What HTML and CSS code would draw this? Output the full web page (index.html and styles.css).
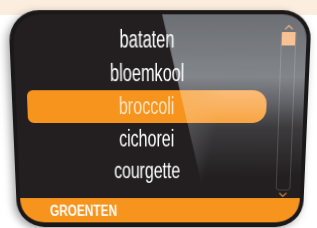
FILE: index.html
```html
<!DOCTYPE html>
<html lang="nl">
  <head>
    <meta charset="UTF-8" />
    <meta name="viewport" content="width=device-width, initial-scale=1.0" />
    <title>Groenten</title>
    <link rel="stylesheet" href="styles.css">
  </head>
  <body>
    <div class="stage">
      <div class="panel">
        <div class="screen">
          <ul class="list">
            <li><span>bataten</span></li>
            <li><span>bloemkool</span></li>
            <li class="selected"><span>broccoli</span></li>
            <li><span>cichorei</span></li>
            <li><span>courgette</span></li>
          </ul>

          <div class="scroll">
            <svg class="arrow" viewBox="0 0 9 5">
              <polyline points="0.8,4.4 4.5,0.8 8.2,4.4" />
            </svg>
            <div class="track">
              <div class="thumb"></div>
            </div>
            <svg class="arrow down" viewBox="0 0 9 5">
              <polyline points="0.8,0.6 4.5,4.2 8.2,0.6" />
            </svg>
          </div>
        </div>

        <div class="footer"><span>GROENTEN</span></div>

        <!-- glass reflection over the screen -->
        <div class="gloss"></div>
      </div>
    </div>
  </body>
</html>
```

FILE: styles.css
```css
body {
  margin: 0;
  width: 317px;
  height: 228px;
  overflow: hidden;
  background: linear-gradient(#fbeedf 0, #fbeedf 15px, #fff 15px);
  font-family: "Liberation Sans", Arial, sans-serif;
}

.stage {
  padding: 12px 0 0 13px;
}

.panel {
  position: relative;
  width: 294px;
  height: 220px;
  box-sizing: border-box;
  display: flex;
  flex-direction: column;
  background-color: #231f20;
  border: 4px solid #1b1819;
  border-bottom-width: 5px;
  border-radius: 30px 28px 28px 28px;
  overflow: hidden;
  box-shadow: -3px 3px 9px rgba(0, 0, 0, 0.35);
  transform: perspective(600px) rotateX(-10deg);
}

.screen {
  display: flex;
  height: 185px;
}

.list {
  list-style: none;
  margin: 0;
  padding: 8px 0 0 11px;
  width: 238px;
}

.list li {
  height: 33px;
  line-height: 32px;
  text-align: center;
  color: #fff;
  font-size: 23px;
}

/* the reference face is a condensed grotesque */
.list span,
.footer span {
  display: inline-block;
  transform: scaleX(0.7);
}

.list .selected {
  background-color: #f7941d;
  color: #fde4c6;
  border-radius: 6px 14px 14px 6px;
}

.scroll {
  display: flex;
  flex-direction: column;
  align-items: center;
  width: 15px;
  margin-left: 12px;
  padding-top: 10px;
}

.arrow {
  display: block;
  width: 9px;
  height: 5px;
  fill: none;
  stroke: #e0893a;
  stroke-width: 1.2;
}

.arrow.down {
  margin-top: 2px;
}

.track {
  box-sizing: border-box;
  width: 15px;
  height: 160px;
  margin-top: 2px;
  border: 1px solid rgba(255, 255, 255, 0.16);
  border-top: none;
  border-radius: 0 0 4px 4px;
}

.thumb {
  height: 13px;
  background-color: #f39a48;
}

.footer {
  height: 26px;
  padding-left: 30px;
  line-height: 28px;
  background-color: #f7941d;
  color: #fff;
  font-size: 16px;
  font-weight: bold;
  border-radius: 0 0 22px 22px;
}

.footer span {
  transform-origin: left center;
  transform: scaleX(0.76);
}

.gloss {
  position: absolute;
  top: 0;
  left: 145px;
  right: 0;
  height: 185px;
  pointer-events: none;
  mix-blend-mode: screen;
  clip-path: polygon(0 0, 100% 0, 100% 100%, 44px 100%);
  background:
    linear-gradient(103deg, rgba(66, 70, 74, 0) 0, rgb(66, 70, 74) 14px, rgba(66, 70, 74, 0) 62px) left bottom / 100% 60% no-repeat,
    linear-gradient(180deg, rgb(85, 91, 96) 0%, rgb(110, 116, 120) 33%, rgb(72, 77, 82) 47%, rgb(30, 32, 34) 60%, rgb(0, 0, 0) 88%);
}
```
